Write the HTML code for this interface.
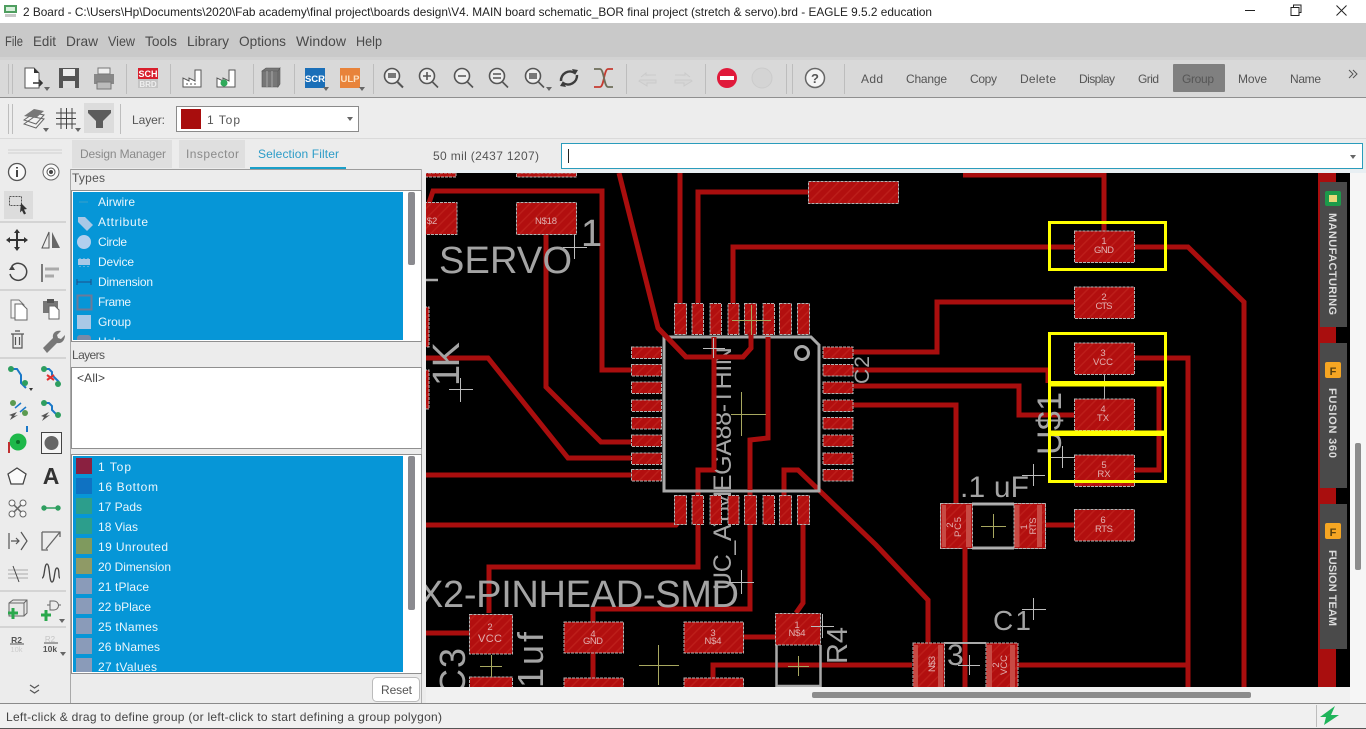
<!DOCTYPE html>
<html><head><meta charset="utf-8"><title>EAGLE Board</title>
<style>
html,body{margin:0;padding:0;background:#ececec;overflow:hidden}
svg{display:block}
text{font-family:"Liberation Sans",sans-serif}
.m{font-size:14px;fill:#4a4a4a}
.b{font-size:12px;fill:#555}
.w{font-size:12px;fill:#eaf6fc}
.tab{font-size:12px;fill:#8a8a8a}
.tr{fill:none;stroke:#a90e0e;stroke-width:5;stroke-linejoin:miter}
.pad{fill:url(#h);stroke:#b4b4b4;stroke-width:1;stroke-dasharray:3 1}
.vt{fill:#a4a4a4;font-size:38px}
.pl{fill:#e0b0b0;font-size:9.5px;text-anchor:middle}
.cw{stroke:#bdbdbd;stroke-width:1;fill:none}
.cy{stroke:#a8a860;stroke-width:1;fill:none}
.yl{fill:none;stroke:#ffff00;stroke-width:3}
.ic{fill:none;stroke:#555;stroke-width:1.3}
.sep{stroke:#bdbdbd;stroke-width:1}
.g{fill:#2e9e5f}
.bl{fill:none;stroke:#1a78c8;stroke-width:2}
.gl{fill:none;stroke:#a9a9a9;stroke-width:3}
</style></head>
<body>
<svg width="1366" height="729" viewBox="0 0 1366 729" xmlns="http://www.w3.org/2000/svg">
<defs>
<pattern id="h" width="7" height="7" patternUnits="userSpaceOnUse" patternTransform="rotate(45)">
<rect width="7" height="7" fill="#b20f0f"/><rect width="1.5" height="7" fill="#bc1e1a"/>
</pattern>
<clipPath id="cv"><rect x="426" y="173" width="924" height="514"/></clipPath>
<clipPath id="l1"><rect x="73" y="192" width="330" height="148"/></clipPath>
<clipPath id="l2"><rect x="73" y="456" width="330" height="216"/></clipPath>
</defs>

<!-- base -->
<rect width="1366" height="729" fill="#ececec"/>
<rect width="1366" height="23" fill="#fff"/>
<rect y="23" width="1366" height="34" fill="#c9c9c9"/>
<rect y="57" width="1366" height="3" fill="#d2d2d2"/>
<rect y="60" width="1366" height="37" fill="#d9d9d9"/>
<rect y="97" width="1366" height="1" fill="#8f8f8f"/>
<rect y="98" width="1366" height="40" fill="#ededed"/>
<rect y="138" width="1366" height="1" fill="#dadada"/>

<!-- title bar -->
<rect x="4" y="5" width="13" height="8" fill="#4f9e60"/><rect x="6" y="7" width="9" height="4" fill="#d8f0dc"/><path d="M5 14h11v3H5z" fill="#c8c8c8"/>
<text x="23" y="16" font-size="12" fill="#222" textLength="909" lengthAdjust="spacingAndGlyphs">2 Board - C:\Users\Hp\Documents\2020\Fab academy\final project\boards design\V4. MAIN board schematic_BOR final project (stretch &amp; servo).brd - EAGLE 9.5.2 education</text>
<path d="M1245 10.500h10" stroke="#222" fill="none"/>
<path d="M1291 7.500h8v8h-8zM1293.500 7.500v-2.500h7.500v7.500h-2" stroke="#222" fill="none"/>
<path d="M1336.500 5.500l10 10M1346.500 5.500l-10 10" stroke="#222" fill="none"/>

<!-- menu -->
<text x="5" y="46" class="m" textLength="18" lengthAdjust="spacingAndGlyphs">File</text>
<text x="33" y="46" class="m" textLength="23" lengthAdjust="spacingAndGlyphs">Edit</text>
<text x="66" y="46" class="m" textLength="32" lengthAdjust="spacingAndGlyphs">Draw</text>
<text x="108" y="46" class="m" textLength="27" lengthAdjust="spacingAndGlyphs">View</text>
<text x="145" y="46" class="m" textLength="32" lengthAdjust="spacingAndGlyphs">Tools</text>
<text x="187" y="46" class="m" textLength="42" lengthAdjust="spacingAndGlyphs">Library</text>
<text x="239" y="46" class="m" textLength="47" lengthAdjust="spacingAndGlyphs">Options</text>
<text x="296" y="46" class="m" textLength="50" lengthAdjust="spacingAndGlyphs">Window</text>
<text x="356" y="46" class="m" textLength="26" lengthAdjust="spacingAndGlyphs">Help</text>

<!-- toolbar separators -->
<path class="sep" d="M8.500 64v30M12.500 64v30M126.500 64v30M170.500 64v30M253.500 64v30M294.500 64v30M373.500 64v30M626.500 64v30M705.500 64v30M786.500 64v30M792.500 64v30M844.500 64v30M8.500 104v30M12.500 104v30M120.500 104v30"/>

<!-- toolbar icons -->
<path d="M25 68h9l5 5v15H25z" fill="#fff" stroke="#555"/><path d="M34 68l5 5h-5z" fill="#333"/><path d="M33 83h9m-3-3l3 3-3 3" stroke="#333" stroke-width="1.600" fill="none"/><path d="M44 87h6l-3 4z" fill="#666"/>
<rect x="59" y="68" width="20" height="20" fill="#555"/><rect x="63" y="69" width="12" height="7" fill="#eee"/><rect x="63" y="81" width="12" height="7" fill="#ddd"/>
<rect x="94" y="74" width="20" height="10" fill="#888"/><rect x="98" y="68" width="12" height="6" fill="#eee" stroke="#777"/><rect x="97" y="82" width="14" height="7" fill="#bbb" stroke="#777"/>
<rect x="138" y="68" width="20" height="11" fill="#d81e2c"/><text x="148" y="77" font-size="9" font-weight="bold" fill="#fff" text-anchor="middle">SCH</text><rect x="138" y="79" width="20" height="9" fill="#c4c4c4"/><text x="148" y="87" font-size="8" font-weight="bold" fill="#eee" text-anchor="middle">BRD</text>
<path d="M183 87V78l6 3v-3l6 3v-11h6v17z" fill="#fff" stroke="#555"/><path d="M186 84h12" stroke="#555" stroke-dasharray="2 2"/>
<path d="M217 87V78l6 3v-3l6 3v-11h6v17z" fill="#fff" stroke="#555"/><circle cx="224" cy="83" r="3.500" fill="#2faa5a"/>
<path d="M262 71l4-3h14l-2 3zM262 71h16v16h-16zM278 71l2-3v16l-2 3z" fill="#777" stroke="#555" stroke-width=".6"/><path d="M267 71v16M272 71v16" stroke="#aaa"/>
<rect x="305" y="68" width="20" height="20" fill="#1b6fb8"/><text x="315" y="82" font-size="9.500" font-weight="bold" fill="#fff" text-anchor="middle">SCR</text><path d="M323 87h6l-3 4z" fill="#666"/>
<rect x="340" y="68" width="20" height="20" fill="#e8833a"/><text x="350" y="82" font-size="9.500" font-weight="bold" fill="#fde0c0" text-anchor="middle">ULP</text><path d="M359 87h6l-3 4z" fill="#666"/>

<g fill="none" stroke="#555" stroke-width="1.600">
<circle cx="392" cy="76" r="7.500" fill="#eee"/><path d="M397.500 82l5.500 5.500" stroke-width="2"/><rect x="388" y="73" width="8" height="5" fill="#777" stroke="none"/>
<circle cx="427" cy="76" r="7.500" fill="#eee"/><path d="M432.500 82l5.500 5.500M423 76h8M427 72v8" />
<circle cx="462" cy="76" r="7.500" fill="#eee"/><path d="M467.500 82l5.500 5.500M458 76h8"/>
<circle cx="497" cy="76" r="7.500" fill="#eee"/><path d="M502.500 82l5.500 5.500M493 74h8M493 78h8"/>
<circle cx="533" cy="76" r="7.500" fill="#eee"/><path d="M538.500 82l5.500 5.500"/><rect x="529" y="73" width="8" height="6" fill="#777" stroke="none"/>
</g>
<path d="M546 87h6l-3 4z" fill="#666"/>
<path d="M561 81a9 9 0 0 1 14-8M577 75a9 9 0 0 1-14 8" fill="none" stroke="#3c3c3c" stroke-width="2.500"/><path d="M572 69l6 1-3 5zM566 87l-6-1 3-5z" fill="#3c3c3c"/>
<path d="M594 87h6c4 0 4-18 8-18h5" fill="none" stroke="#c63b30" stroke-width="1.800"/><path d="M594 69h6c4 0 4 18 8 18h5" fill="none" stroke="#6e6e5a" stroke-width="1.800"/>
<path d="M640 80h16v3h-9v3l-8-5zM641 77l5-4v2h10" fill="#d6d6d6" stroke="#cbcbcb"/>
<path d="M691 80h-16v3h9v3l8-5zM690 77l-5-4v2h-10" fill="#d6d6d6" stroke="#cbcbcb"/>
<circle cx="727" cy="78" r="10" fill="#e0193a"/><rect x="720" y="76" width="14" height="4" fill="#fff"/>
<circle cx="762" cy="78" r="10" fill="#d4d4d4" stroke="#cbcbcb"/>
<circle cx="815" cy="78" r="9.500" fill="#f4f4f4" stroke="#666" stroke-width="1.500"/><text x="815" y="83" font-size="13" font-weight="bold" fill="#555" text-anchor="middle">?</text>

<!-- toolbar text -->
<rect x="1173" y="64" width="52" height="28" rx="1" fill="#808080"/>
<text x="861" y="83" class="b" textLength="22">Add</text>
<text x="906" y="83" class="b" textLength="41">Change</text>
<text x="970" y="83" class="b" textLength="27">Copy</text>
<text x="1020" y="83" class="b" textLength="36">Delete</text>
<text x="1079" y="83" class="b" textLength="36">Display</text>
<text x="1138" y="83" class="b" textLength="21">Grid</text>
<text x="1182" y="83" font-size="12" fill="#565656" textLength="32">Group</text>
<text x="1238" y="83" class="b" textLength="29">Move</text>
<text x="1290" y="83" class="b" textLength="31">Name</text>
<path d="M1349 70l4 4-4 4M1353 70l4 4-4 4" fill="none" stroke="#555"/>

<!-- row 2 -->
<rect x="84" y="103" width="30" height="30" fill="#dcdcdc"/>
<path d="M24 124l10-7 10 2-8 9zM24 120l10-7 10 2-8 9z" fill="#f2f2f2" stroke="#666"/><path d="M24 116l10-7 10 2-8 7z" fill="#777"/><path d="M43 128h6l-3 4z" fill="#666"/>
<path d="M56 113h20M56 118.500h20M56 124h20M61 108v21M66.500 108v21M72 108v21" stroke="#444" fill="none"/><path d="M75 128h6l-3 4z" fill="#666"/>
<path d="M88 110h23v3l-8 8v7h-7v-7l-8-8z" fill="#5c5c5c"/>
<text x="132" y="124" class="b" textLength="33">Layer:</text>
<rect x="176.500" y="106.500" width="182" height="25" fill="#fff" stroke="#8a8a8a"/>
<rect x="181" y="109" width="20" height="20" fill="#a80d0d"/>
<text x="207" y="124" class="b" textLength="33">1  Top</text>
<path d="M347 117h6l-3 4z" fill="#666"/>

<!-- tabs -->
<rect x="72" y="140" width="100" height="28" fill="#dfdfdf"/>
<rect x="179" y="140" width="66" height="28" fill="#dfdfdf"/>
<text x="80" y="158" class="tab" textLength="86">Design Manager</text>
<text x="186" y="158" class="tab" textLength="53">Inspector</text>
<text x="258" y="158" font-size="12" fill="#2c9cc8" textLength="81">Selection Filter</text>
<rect x="250" y="167" width="96" height="3" fill="#1a9fc8"/>

<!-- left col separator -->
<rect x="70" y="169" width="1" height="534" fill="#a9a9a9"/>
<rect x="71" y="169" width="351" height="1" fill="#9c9c9c"/>
<rect x="421" y="169" width="1" height="534" fill="#b0b0b0"/>

<!-- panel -->
<text x="72" y="182" class="b" textLength="33">Types</text>
<rect x="71.500" y="190.500" width="350" height="151" fill="#fff" stroke="#8f8f8f"/>
<rect x="73" y="192" width="330" height="148" fill="#0696d7"/>
<rect x="408" y="192" width="7" height="73" rx="2" fill="#8a8a8f"/>
<g clip-path="url(#l1)">
<path d="M79 202h9" stroke="#3aa0c8"/>
<path d="M78 217l7 0 8 8-6 6-9-9z" fill="#a9c8e6"/>
<circle cx="84" cy="242" r="7" fill="#b2cfee"/>
<rect x="78" y="259" width="12" height="6" fill="#a9c8e6"/><path d="M80 258v9M84 258v9M88 258v9" stroke="#a9c8e6" stroke-dasharray="1 1"/>
<path d="M77 282h14M77 279v6M91 279v6" stroke="#1e4f88"/>
<rect x="77.500" y="295.500" width="14" height="14" fill="none" stroke="#6c7a9a" stroke-width="2"/>
<rect x="77" y="315" width="14" height="14" fill="#a9c8e6"/>
<rect x="77" y="335" width="14" height="14" rx="3" fill="#7a8aa8"/>
<text x="98" y="206" class="w" textLength="37">Airwire</text>
<text x="98" y="226" class="w" textLength="50">Attribute</text>
<text x="98" y="246" class="w" textLength="29">Circle</text>
<text x="98" y="266" class="w" textLength="36">Device</text>
<text x="98" y="286" class="w" textLength="55">Dimension</text>
<text x="98" y="306" class="w" textLength="33">Frame</text>
<text x="98" y="326" class="w" textLength="33">Group</text>
<text x="98" y="346" class="w" textLength="24">Hole</text>
</g>
<text x="72" y="359" class="b" textLength="33">Layers</text>
<rect x="71.500" y="367.500" width="350" height="81" fill="#fff" stroke="#8f8f8f"/>
<text x="77" y="382" font-size="12" fill="#444" textLength="28">&lt;All&gt;</text>
<rect x="71.500" y="454.500" width="350" height="219" fill="#fff" stroke="#8f8f8f"/>
<rect x="73" y="456" width="330" height="216" fill="#0696d7"/>
<rect x="408" y="456" width="7" height="154" rx="2" fill="#8a8a8f"/>
<g clip-path="url(#l2)">
<rect x="76" y="458" width="16" height="16" fill="#8a2040"/>
<rect x="76" y="478" width="16" height="16" fill="#0f72c2"/>
<rect x="76" y="498" width="16" height="16" fill="#2c9e8c"/>
<rect x="76" y="518" width="16" height="16" fill="#2c9e8c"/>
<rect x="76" y="538" width="16" height="16" fill="#7f9a5e"/>
<rect x="76" y="558" width="16" height="16" fill="#8f9a66"/>
<rect x="76" y="578" width="16" height="16" fill="#8a9bb9"/>
<rect x="76" y="598" width="16" height="16" fill="#8a9bb9"/>
<rect x="76" y="618" width="16" height="16" fill="#8a9bb9"/>
<rect x="76" y="638" width="16" height="16" fill="#8a9bb9"/>
<rect x="76" y="658" width="16" height="16" fill="#8a9bb9"/>
<text x="98" y="471" class="w" textLength="33">1  Top</text>
<text x="98" y="491" class="w" textLength="60">16 Bottom</text>
<text x="98" y="511" class="w" textLength="44">17 Pads</text>
<text x="98" y="531" class="w" textLength="40">18 Vias</text>
<text x="98" y="551" class="w" textLength="70">19 Unrouted</text>
<text x="98" y="571" class="w" textLength="73">20 Dimension</text>
<text x="98" y="591" class="w" textLength="51">21 tPlace</text>
<text x="98" y="611" class="w" textLength="53">22 bPlace</text>
<text x="98" y="631" class="w" textLength="60">25 tNames</text>
<text x="98" y="651" class="w" textLength="62">26 bNames</text>
<text x="98" y="671" class="w" textLength="59">27 tValues</text>
</g>
<rect x="372.500" y="677.500" width="47" height="24" rx="4" fill="#fff" stroke="#bbb"/>
<text x="381" y="694" class="b" textLength="31">Reset</text>

<!-- left icons -->
<g>
<path d="M8 150h54M8 153h54" stroke="#d0d0d0"/>
<rect x="4" y="191" width="29" height="28" fill="#dcdcdc"/>
<path class="sep" d="M0 222h66M0 290h66M0 358h66M0 591h66M0 627h66"/>
<circle cx="17" cy="172" r="8.500" fill="#fafafa" stroke="#555" stroke-width="1.300"/><path d="M17 170v7M17 167v1.500" stroke="#444" stroke-width="2"/>
<circle cx="51" cy="172" r="8" fill="#fafafa" stroke="#666"/><circle cx="51" cy="172" r="4" fill="#fff" stroke="#555"/><circle cx="51" cy="172" r="2" fill="#444"/>
<rect x="9.500" y="196.500" width="12" height="9" fill="none" stroke="#555" stroke-dasharray="2 1"/><path d="M21 203l6 6-3 .5 2 4-2 1-2-4-2 2z" fill="#333"/>
<path d="M17 231v18M8 240h18" stroke="#333" stroke-width="2"/><path d="M17 229l-3 4h6zM17 251l-3-4h6zM6 240l4-3v6zM28 240l-4-3v6z" fill="#333"/>
<path d="M49 232v16H42z" fill="none" stroke="#555"/><path d="M52 232v16h8z" fill="#666"/>
<path d="M12 266a8.500 8.500 0 1 1-2 8" fill="none" stroke="#444" stroke-width="1.500"/><path d="M9 270h6l-3-5z" fill="#444"/>
<path d="M42 264v18" stroke="#555" stroke-width="1.500"/><path d="M45 269h14M45 276h9" stroke="#aaa" stroke-width="3"/>
<path d="M11 300h8l5 5v13H11z" fill="#f4f4f4" stroke="#777"/><path d="M15 304h7l5 5v11H15z" fill="#fff" stroke="#666"/>
<path d="M43 301h15v12H43z" fill="#777"/><rect x="47" y="299" width="7" height="4" fill="#555"/><path d="M49 306h6l4 4v9H49z" fill="#fff" stroke="#666"/>
<path d="M11 334h13M13 334v14h9v-14M15 331h5M15.500 337v8M19.500 337v8" fill="none" stroke="#555" stroke-width="1.200"/>
<path d="M43 348l10-10c-1-5 3-8 8-7l-4 4 1 3 3 1 4-4c0 5-3 9-8 8l-10 10z" fill="#777"/>
<path d="M11 369h6l4 6v8l5 5" class="bl"/><circle cx="11" cy="369" r="3" class="g"/><circle cx="25" cy="383" r="3" class="g"/><path d="M29 388l4 0-2 3z" fill="#333"/>
<path d="M44 369h5l3 3v3l7 7" class="bl"/><circle cx="44" cy="369" r="3" class="g"/><circle cx="58" cy="384" r="3" class="g"/><path d="M47 375l7 5M54 375l-7 5" stroke="#e03030" stroke-width="2"/>
<circle cx="13" cy="403" r="3" fill="#5a9a50"/><circle cx="25" cy="413" r="3" fill="#5a9a50"/><path d="M15 408l6-5M20 412l6-5" stroke="#1a78c8" stroke-width="1.500"/><path d="M9 415l8-3-3 4 4-1-8 5 2-4z" fill="#555"/>
<path d="M44 403h5l3 3v4l5 5" class="bl"/><circle cx="44" cy="403" r="3" class="g"/><circle cx="58" cy="415" r="3" class="g"/><path d="M41 416l8-4-3 4 4-1-8 6 2-4z" fill="#555"/>
<circle cx="18" cy="442" r="8.500" fill="#1eb84a"/><circle cx="18" cy="442" r="2" fill="#0a7028"/><path d="M27 432v-6" stroke="#1a78c8" stroke-width="2"/><path d="M9 442v11" stroke="#c03030" stroke-width="2"/>
<rect x="41.500" y="432.500" width="20" height="21" fill="#f5f5f5" stroke="#444"/><circle cx="51.500" cy="443" r="7" fill="#666"/>
<path d="M17 468l9 6-3 10H11l-3-10z" fill="#fafafa" stroke="#444" stroke-width="1.300"/>
<text x="51" y="484" font-size="23" font-weight="bold" fill="#333" text-anchor="middle">A</text>
<path d="M12 503l11 11M23 503l-11 11" stroke="#666" stroke-width="1.500"/><circle cx="12" cy="503" r="3" fill="#fafafa" stroke="#666"/><circle cx="23" cy="503" r="3" fill="#fafafa" stroke="#666"/><circle cx="12" cy="514" r="3" fill="#fafafa" stroke="#666"/><circle cx="23" cy="514" r="3" fill="#fafafa" stroke="#666"/>
<path d="M44 508h14" stroke="#2e9e5f" stroke-width="1.500"/><circle cx="44" cy="508" r="2.700" class="g"/><circle cx="58" cy="508" r="2.700" class="g"/>
<path d="M9 533v16M21 532l6 9-6 9M11 541h8m-3-3l3 3-3 3" fill="none" stroke="#555" stroke-width="1.200"/>
<path d="M42 532h18v5M42 532v18h6M60 532l-14 17" fill="none" stroke="#666" stroke-width="1.300"/>
<path d="M8 570h20M8 574h20M8 578h20" stroke="#aaa"/><path d="M13 566l6 16" stroke="#444"/>
<path d="M42 578c3 0 2-14 5-14s2 18 5 18 2-14 5-14 1 10 3 10" fill="none" stroke="#444" stroke-width="1.300"/>
<path d="M9 603l4-3h14v13l-3 3H9zM9 603h15v13M24 603l3-3" fill="#e8e8e8" stroke="#666"/><path d="M8 613h10M13 608v11" stroke="#2aa84c" stroke-width="3"/>
<path d="M50 601h4a4 4 0 0 1 0 9h-4zM50 605h-3M58 605h3" fill="none" stroke="#666"/><path d="M41 615h10M46 610v11" stroke="#2aa84c" stroke-width="3"/><path d="M59 619h6l-3 4z" fill="#666"/>
<text x="16.500" y="643" font-size="8.500" font-weight="bold" fill="#555" text-anchor="middle">R2</text><path d="M10 644h14" stroke="#555"/><text x="16.500" y="652" font-size="7.500" fill="#ccc" text-anchor="middle">10k</text>
<text x="50" y="642" font-size="8" fill="#c4c4c4" text-anchor="middle">R2</text><path d="M44 643h14" stroke="#555"/><text x="50" y="652" font-size="8.500" font-weight="bold" fill="#555" text-anchor="middle">10k</text><path d="M60 652h6l-3 4z" fill="#666"/>
<path d="M30 685l4.500 3 4.500-3M30 690l4.500 3 4.500-3" fill="none" stroke="#555" stroke-width="1.200"/>
</g>

<!-- command line -->
<text x="433" y="160" font-size="12" fill="#555" textLength="106">50 mil (2437 1207)</text>
<rect x="561.500" y="143.500" width="801" height="25" fill="#fff" stroke="#2a9cbc"/>
<rect x="568" y="149" width="1" height="14" fill="#222"/>
<path d="M1350 155h6l-3 4z" fill="#666"/>
<rect x="426" y="170" width="940" height="3" fill="#e8eff3"/>

<!-- canvas -->
<rect x="426" y="173" width="924" height="514" fill="#000"/>
<g clip-path="url(#cv)">
<!-- traces -->
<g class="tr">
<path class="tr" d="M429 203l4-12h169v179h29"/>
<path class="tr" d="M546 234v153l55 55h30"/>
<path class="tr" d="M619 173l39 155 28 29h57l8-9v-15"/>
<path class="tr" d="M680 173v130"/>
<path class="tr" d="M698 303v-111h111"/>
<path class="tr" d="M733 303v-56h341"/>
<path class="tr" d="M1135 247h53l56 55v385"/>
<path class="tr" d="M963 175h141v56"/>
<path class="tr" d="M426 358h62l80 100h63"/>
<path class="tr" d="M426 475h205"/>
<path class="tr" d="M426 525h250l6-7v-18"/>
<path class="tr" d="M489 613v-46h209v-97h16v-133"/>
<path class="tr" d="M768 320v118l-18 2v169h-157v13"/>
<path class="tr" d="M593 653v27"/>
<path class="tr" d="M784 500v-30h14l78 75 52 55v43"/>
<path class="tr" d="M803 523v80l-7 10"/>
<path class="tr" d="M743 637h33"/>
<path class="tr" d="M426 633h43"/>
<path class="tr" d="M713 678v-13h199"/>
<path class="tr" d="M1018 665h170"/>
<path class="tr" d="M1134 358h54v329"/>
<path class="tr" d="M852 405h104v98"/>
<path class="tr" d="M852 352h85v-50h137"/>
<path class="tr" d="M852 370h196v13"/>
<path class="tr" d="M852 386h167v29h55"/>
<path class="tr" d="M1159 383v87h-25"/>
<path class="tr" d="M965 548v139"/>
<path class="tr" d="M1046 525h28"/>
</g>

<!-- vector labels under pads -->
<path d="M426 280h12" stroke="#a9a9a9" stroke-width="2.500"/>
<text x="439" y="273" class="vt" textLength="133">SERVO</text>
<text x="581" y="246" class="vt" font-size="36">1</text>
<text class="vt" transform="translate(459 386) rotate(-90)" textLength="44">1K</text>
<text x="418" y="607" class="vt" textLength="321">X2-PINHEAD-SMD</text>
<text class="vt" transform="translate(731 590) rotate(-90)" style="font-size:25px" textLength="243">UC_ATMEGA88-THIN</text>
<text class="vt" transform="translate(869 384) rotate(-90)" style="font-size:21px" textLength="28">C2</text>
<text class="vt" transform="translate(1061 455) rotate(-90)" style="font-size:34px" textLength="63">U$1</text>
<text x="960" y="497" class="vt" style="font-size:30px" textLength="69">.1 uF</text>
<text x="993" y="630" class="vt" style="font-size:28px" textLength="38">C1</text>
<text class="vt" transform="translate(847 664) rotate(-90)" style="font-size:29px" textLength="37">R4</text>
<text class="vt" transform="translate(465 695) rotate(-90)" style="font-size:36px" textLength="47">C3</text>
<text class="vt" transform="translate(543 688) rotate(-90)" style="font-size:36px" textLength="56">1uf</text>
<text x="947" y="665" class="vt" style="font-size:30px">3</text>

<!-- IC outline -->
<path d="M664 491V337h147l8 8v146z" fill="none" stroke="#a9a9a9" stroke-width="3"/>
<circle cx="802" cy="353" r="6.500" fill="none" stroke="#a9a9a9" stroke-width="3"/>

<!-- QFP pins -->
<g class="pad">
<rect class="pad" x="674.500" y="303.500" width="12" height="31"/><rect class="pad" x="692" y="303.500" width="11.500" height="31"/><rect class="pad" x="710" y="303.500" width="11.500" height="31"/><rect class="pad" x="728" y="303.500" width="11" height="31"/><rect class="pad" x="744.500" y="303.500" width="12" height="31"/><rect class="pad" x="763" y="303.500" width="11.500" height="31"/><rect class="pad" x="779.500" y="303.500" width="12" height="31"/><rect class="pad" x="797.500" y="303.500" width="12" height="31"/>
<rect class="pad" x="674.500" y="495.500" width="12" height="29"/><rect class="pad" x="692" y="495.500" width="11.500" height="29"/><rect class="pad" x="710" y="495.500" width="11.500" height="29"/><rect class="pad" x="728" y="495.500" width="11" height="29"/><rect class="pad" x="744.500" y="495.500" width="12" height="29"/><rect class="pad" x="763" y="495.500" width="11.500" height="29"/><rect class="pad" x="779.500" y="495.500" width="12" height="29"/><rect class="pad" x="797.500" y="495.500" width="12" height="29"/>
<rect class="pad" x="631.500" y="347" width="30" height="11.500"/><rect class="pad" x="631.500" y="364.500" width="30" height="11.500"/><rect class="pad" x="631.500" y="382" width="30" height="11.500"/><rect class="pad" x="631.500" y="400" width="30" height="11.500"/><rect class="pad" x="631.500" y="417.500" width="30" height="11.500"/><rect class="pad" x="631.500" y="435" width="30" height="11.500"/><rect class="pad" x="631.500" y="453" width="30" height="11.500"/><rect class="pad" x="631.500" y="469.500" width="30" height="11.500"/>
<rect class="pad" x="823" y="347" width="30" height="11.500"/><rect class="pad" x="823" y="364.500" width="30" height="11.500"/><rect class="pad" x="823" y="382" width="30" height="11.500"/><rect class="pad" x="823" y="400" width="30" height="11.500"/><rect class="pad" x="823" y="417.500" width="30" height="11.500"/><rect class="pad" x="823" y="435" width="30" height="11.500"/><rect class="pad" x="823" y="453" width="30" height="11.500"/><rect class="pad" x="823" y="469.500" width="30" height="11.500"/>
</g>

<!-- retrace IC-crossing strokes on top of outline -->
<path class="tr" d="M658 328l28 29h57l8-9v-15M714 337v133M768 337v101M750 440v50"/>

<!-- pads -->
<rect class="pad" x="420" y="173" width="36" height="4"/>
<rect class="pad" x="516.500" y="173" width="60" height="4"/>
<rect class="pad" x="420" y="202.500" width="37" height="32"/>
<rect class="pad" x="516.500" y="202.500" width="60" height="32"/>
<rect class="pad" x="808.500" y="181.500" width="90" height="22"/>
<rect class="pad" x="420" y="307" width="9" height="40"/>
<rect class="pad" x="420" y="370" width="9" height="39"/>
<rect class="pad" x="1074.500" y="231" width="60" height="31.500"/>
<rect class="pad" x="1074.500" y="287" width="60" height="31.500"/>
<rect class="pad" x="1074.500" y="343" width="60" height="31.500"/>
<rect class="pad" x="1074.500" y="399" width="60" height="31.500"/>
<rect class="pad" x="1074.500" y="455" width="60" height="31.500"/>
<rect class="pad" x="1074.500" y="509.500" width="60" height="31.500"/>
<rect class="pad" x="469.500" y="614.500" width="43" height="39.500"/>
<rect class="pad" x="469.500" y="677" width="43" height="20"/>
<rect class="pad" x="564" y="622" width="59.500" height="31"/>
<rect class="pad" x="564" y="678" width="59.500" height="20"/>
<rect class="pad" x="684" y="622" width="59.500" height="31"/>
<rect class="pad" x="684" y="678" width="59.500" height="20"/>
<path d="M776.500 645v45M820.500 645v45M776 686h45" class="gl" style="stroke-width:2.500"/>
<rect class="pad" x="775.500" y="613.500" width="45" height="31.500"/>
<path d="M972 504h42M972 548h42" class="gl"/>
<rect x="940.500" y="503.500" width="105" height="45" fill="none" stroke="#b4b4b4"/>
<rect class="pad" x="940.500" y="503.500" width="32" height="45"/>
<rect class="pad" x="1014" y="503.500" width="31.500" height="45"/>
<rect x="966" y="505" width="5" height="42" fill="#c84a44"/><rect x="1014.500" y="505" width="5" height="42" fill="#c84a44"/><rect x="1037" y="505" width="5" height="42" fill="#c84a44"/><rect x="942" y="505" width="4" height="42" fill="#c84a44"/>
<path d="M944 643h42" class="gl" style="stroke-width:2"/>
<rect class="pad" x="913" y="643" width="31.500" height="50"/>
<rect class="pad" x="986" y="643" width="32" height="50"/>
<rect x="938" y="645" width="5" height="42" fill="#c84a44"/><rect x="987" y="645" width="5" height="42" fill="#c84a44"/><rect x="1010" y="645" width="5" height="42" fill="#c84a44"/><rect x="914" y="645" width="4" height="42" fill="#c84a44"/>
<path class="tr" d="M965 548v8"/>

<!-- pad labels -->
<text x="1104" y="244" class="pl">1</text><text x="1104" y="253" class="pl" textLength="20">GND</text>
<text x="1104" y="300" class="pl">2</text><text x="1104" y="309" class="pl" textLength="17">CTS</text>
<text x="1103" y="356" class="pl">3</text><text x="1103" y="365" class="pl" textLength="20">VCC</text>
<text x="1103" y="412" class="pl">4</text><text x="1103" y="421" class="pl">TX</text>
<text x="1104" y="468" class="pl">5</text><text x="1104" y="477" class="pl">RX</text>
<text x="1103" y="523" class="pl">6</text><text x="1104" y="532" class="pl" textLength="18">RTS</text>
<text x="546" y="224" class="pl" textLength="22">N$18</text>
<text x="432" y="224" class="pl">$2</text>
<text x="490" y="630" class="pl">2</text><text x="490" y="642" class="pl" textLength="24" style="font-size:11px">VCC</text>
<text x="593" y="637" class="pl">4</text><text x="593" y="644" class="pl" textLength="20">GND</text>
<text x="713" y="636" class="pl">3</text><text x="713" y="644" class="pl" textLength="17">N$4</text>
<text x="797" y="628" class="pl">1</text><text x="797" y="636" class="pl" textLength="17">N$4</text>
<g transform="translate(961 537) rotate(-90)"><text class="pl" textLength="20" x="10" y="0" >PC5</text></g>
<g transform="translate(953 529) rotate(-90)"><text class="pl" x="4" y="0">2</text></g>
<g transform="translate(1036 534) rotate(-90)"><text class="pl" textLength="17" x="8" y="0">RTS</text></g>
<g transform="translate(1027 527) rotate(-90)"><text class="pl" x="0" y="0">1</text></g>
<g transform="translate(935 672) rotate(-90)"><text class="pl" textLength="16" x="8" y="0">N$3</text></g>
<g transform="translate(1007 675) rotate(-90)"><text class="pl" textLength="20" x="10" y="0">VCC</text></g>
<g transform="translate(999 668) rotate(-90)"><text class="pl" x="3" y="0">2</text></g>

<!-- connecting thin line -->
<path d="M1104.500 374v25" stroke="#b0b0b0"/>

<!-- crosses -->
<path class="cw" d="M574.500 235v24M563 247.500h24M460.500 378v24M449 389.500h24M741.500 570v24M729 582.500h25M1033.500 464v22M1022 475.500h23M1062.500 446v22M1051 457.500h24M1033.500 598v22M1022 609.500h24M822.500 614v24M811 626.500h23M969.500 655v20M958 665.500h22M713.500 338v20M703 348.500h22"/>
<path class="cy" d="M741.500 392v44M731 414.500h35M751.500 305v30M732 320.500h39M491.500 655v22M480 666.500h22M658.500 645v40M639 665.500h40M798.500 656v20M788 666.500h21M993.500 514v24M981 526.500h25"/>

<!-- yellow rects -->
<rect class="yl" x="1049.500" y="222.500" width="116" height="47"/>
<rect class="yl" x="1049.500" y="333.500" width="116" height="49"/>
<rect class="yl" x="1049.500" y="385" width="116" height="47"/>
<rect class="yl" x="1049.500" y="434.500" width="116" height="47"/>

<!-- right band -->
<rect x="1318" y="173" width="18" height="514" fill="#a90e0e"/>
<rect x="1336" y="173" width="14" height="514" fill="#000"/>
<rect x="1320" y="182" width="27" height="145" fill="#4a4a4a"/>
<rect x="1320" y="343" width="27" height="145" fill="#4a4a4a"/>
<rect x="1320" y="504" width="27" height="145" fill="#4a4a4a"/>
</g>

<!-- tab content -->
<rect x="1325" y="191" width="16" height="15" rx="2" fill="#1c9a4a"/><rect x="1329" y="195" width="8" height="7" fill="#e8d878"/>
<text transform="translate(1329 213) rotate(90)" font-size="11" font-weight="bold" fill="#dcdcdc" textLength="102">MANUFACTURING</text>
<rect x="1325" y="362" width="16" height="16" rx="2" fill="#f5a623"/><text x="1333" y="375" font-size="11" font-weight="bold" fill="#5a4210" text-anchor="middle">F</text>
<text transform="translate(1329 388) rotate(90)" font-size="11" font-weight="bold" fill="#dcdcdc" textLength="70">FUSION 360</text>
<rect x="1325" y="523" width="16" height="16" rx="2" fill="#f5a623"/><text x="1333" y="536" font-size="11" font-weight="bold" fill="#5a4210" text-anchor="middle">F</text>
<text transform="translate(1329 550) rotate(90)" font-size="11" font-weight="bold" fill="#dcdcdc" textLength="76">FUSION TEAM</text>

<!-- scrollbars -->
<rect x="1350" y="173" width="16" height="530" fill="#f6f6f6"/>
<rect x="1355" y="443" width="6" height="127" rx="2" fill="#8c8c8c"/>
<rect x="426" y="687" width="924" height="16" fill="#f1f1f1"/>
<rect x="812" y="692" width="439" height="6" rx="2" fill="#8c8c8c"/>

<!-- status -->
<rect y="703" width="1366" height="1" fill="#8a8a8a"/>
<rect y="704" width="1366" height="24" fill="#f0f0f0"/>
<rect y="728" width="1366" height="1" fill="#555"/>
<text x="6" y="721" font-size="12" fill="#444" textLength="436">Left-click &amp; drag to define group (or left-click to start defining a group polygon)</text>
<path class="sep" d="M1316.500 705v22"/>
<path d="M1335 706l-15 11h6l-2 8 15-10h-8z" fill="#1fb45a"/>
</svg>
</body></html>
